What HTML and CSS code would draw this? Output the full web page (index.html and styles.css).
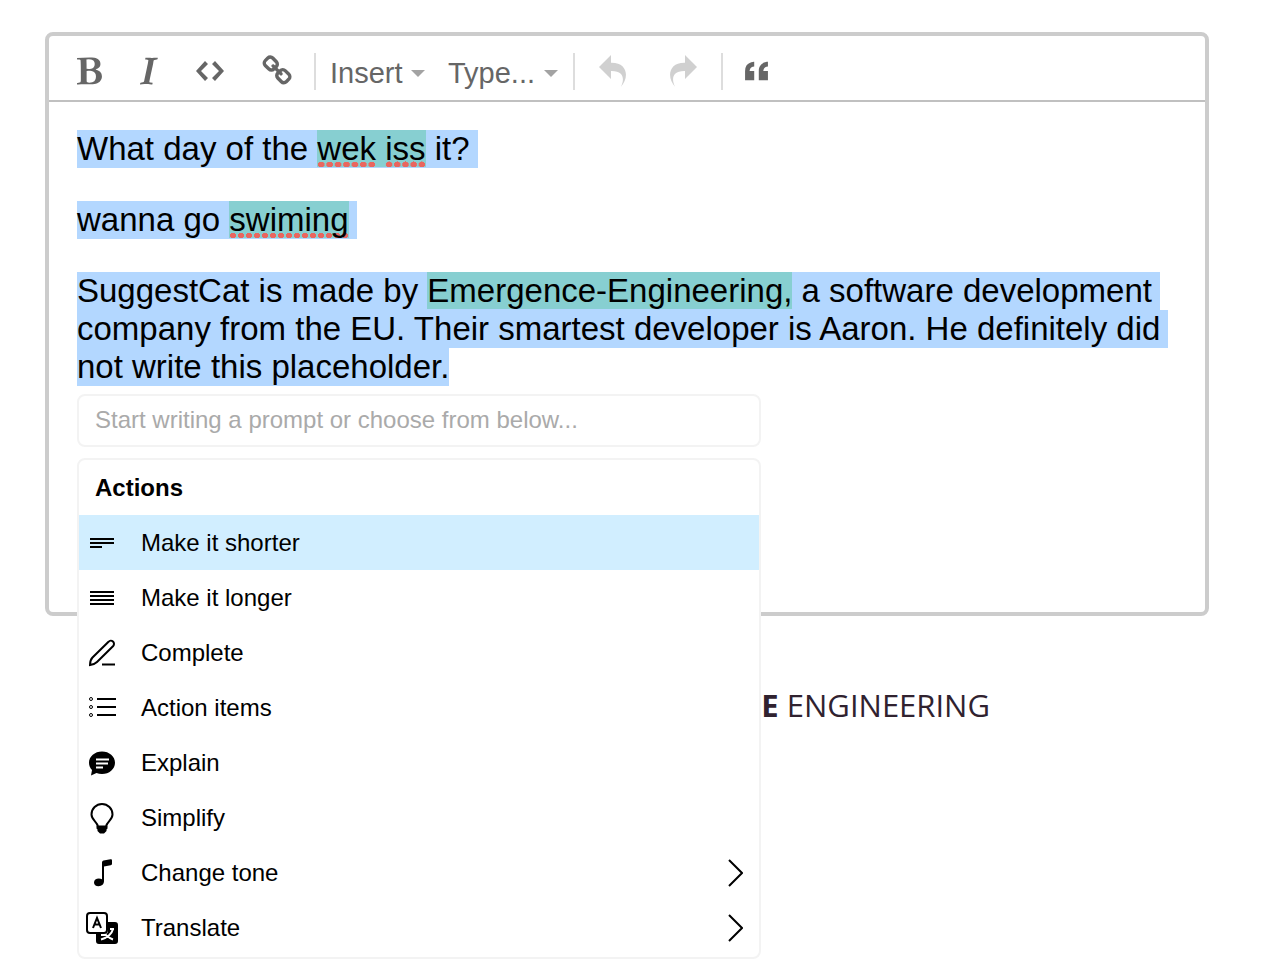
FILE: index.html
```html
<!DOCTYPE html>
<html lang="en">

<head>
    <meta charset="utf-8">
    <title>SuggestCat editor</title>
    <link rel="stylesheet" href="styles.css">
</head>
<body>
    <main class="page">
        <div class="editor">
            <div class="menubar">
                <button type="button" class="menu-icon" aria-label="Bold">
                    <svg width="25" height="32" viewBox="0 0 805 1024"><path d="M317 869q42 18 80 18 214 0 214-191 0-65-23-102-15-25-35-42t-38-26-46-14-48-6-54-1q-41 0-57 5 0 30-0 90t-0 90q0 4-0 38t-0 55 2 47 6 38zM309 442q24 4 62 4 46 0 81-7t62-25 42-51 14-81q0-40-16-70t-45-46-61-24-70-8q-28 0-74 7 0 28 2 86t2 86q0 15-0 45t-0 45q0 26 0 39zM0 950l1-53q8-2 48-9t60-15q4-6 7-15t4-19 3-18 1-21 0-19v-37q0-561-12-585-2-4-12-8t-25-6-28-4-27-2-17-1l-2-47q56-1 194-6t213-5q13 0 39 0t38 0q40 0 78 7t73 24 61 40 42 59 16 78q0 29-9 54t-22 41-36 32-41 25-48 22q88 20 146 76t58 141q0 57-20 102t-53 74-78 48-93 27-100 8q-25 0-75-1t-75-1q-60 0-175 6t-132 6z"/></svg>
                </button>
                <button type="button" class="menu-icon" aria-label="Italic">
                    <svg width="18" height="32" viewBox="0 0 585 1024"><path d="M0 949l9-48q3-1 46-12t63-21q16-20 23-57 0-4 35-165t65-310 29-169v-14q-13-7-31-10t-39-4-33-3l10-58q18 1 68 3t85 4 68 1q27 0 56-1t69-4 56-3q-2 22-10 50-17 5-58 16t-62 19q-4 10-8 24t-5 22-4 26-3 24q-15 84-50 239t-44 203q-1 5-7 33t-11 51-9 47-3 32l0 10q9 2 105 17-1 25-9 56-6 0-18 0t-18 0q-16 0-49-5t-49-5q-78-1-117-1-29 0-81 5t-69 6z"/></svg>
                </button>
                <button type="button" class="menu-icon" aria-label="Code">
                    <svg width="28" height="32" viewBox="0 0 896 1024"><path d="M608 192l-96 96 224 224-224 224 96 96 288-320-288-320zM288 192l-288 320 288 320 96-96-224-224 224-224-96-96z"/></svg>
                </button>
                <button type="button" class="menu-icon" aria-label="Link">
                    <svg width="30" height="32" viewBox="0 0 951 1024"><path d="M832 694q0-22-16-38l-118-118q-16-16-38-16-24 0-41 18 1 1 10 10t12 12 8 10 7 14 2 15q0 22-16 38t-38 16q-8 0-15-2t-14-7-10-8-12-12-10-10q-18 17-18 41 0 22 16 38l117 118q15 15 38 15 22 0 38-14l84-83q16-16 16-38zM430 292q0-22-16-38l-117-118q-16-16-38-16-22 0-38 15l-84 83q-16 16-16 37 0 22 16 38l118 118q15 15 38 15 24 0 41-17-1-1-10-10t-12-12-8-10-7-14-2-15q0-22 16-38t38-16q8 0 15 2t14 7 10 8 12 12 10 10q18-17 18-41zM941 694q0 68-48 116l-84 83q-47 47-116 47-69 0-116-48l-117-118q-47-47-47-116 0-70 50-119l-50-50q-49 50-118 50-68 0-116-48l-118-118q-48-48-48-116t48-116l84-83q47-47 116-47 69 0 116 48l117 118q47 47 47 116 0 70-50 119l50 50q49-50 118-50 68 0 116 48l118 118q48 48 48 116z"/></svg>
                </button>
                <span class="separator"></span>
                <div class="dropdown">
                    <select aria-label="Insert">
                        <option>Insert</option>
                    </select>
                </div>
                <div class="dropdown">
                    <select aria-label="Type">
                        <option>Type...</option>
                    </select>
                </div>
                <span class="separator"></span>
                <button type="button" class="menu-icon" aria-label="Undo" disabled>
                    <svg width="32" height="32" viewBox="0 0 1024 1024"><path d="M761 1024c113-206 132-520-313-509v253l-384-384 384-384v248c534-13 594 472 313 775z"/></svg>
                </button>
                <button type="button" class="menu-icon" aria-label="Redo" disabled>
                    <svg width="32" height="32" viewBox="0 0 1024 1024"><path d="M576 248v-248l384 384-384 384v-253c-446-10-427 303-313 509-280-303-221-789 313-775z"/></svg>
                </button>
                <span class="separator"></span>
                <button type="button" class="menu-icon" aria-label="Quote">
                    <svg width="23" height="32" viewBox="0 0 640 896"><path d="M0 448v256h256v-256h-128c0 0 0-128 128-128v-128c0 0-256 0-256 256zM640 320v-128c0 0-256 0-256 256v256h256v-256h-128c0 0 0-128 128-128z"/></svg>
                </button>
            </div>

            <div class="content">
                <p><span class="selected">What day of the <mark><u>wek</u> <u>iss</u></mark> it?</span></p>
                <p><span class="selected">wanna go <mark><u>swiming</u></mark></span></p>
                <p><span class="selected">SuggestCat is made by <mark>Emergence-Engineering,</mark> a software development company from the EU. Their smartest developer is Aaron. He definitely did</span> <span class="selected last">not write this placeholder.</span></p>
            </div>

            <div class="popup">
                <input type="text" class="prompt" aria-label="Prompt" placeholder="Start writing a prompt or choose from below...">
                <div class="actions">
                    <h2>Actions</h2>
                    <button type="button" class="action active">
                        <svg width="32" height="32" viewBox="0 0 32 32"><path d="M4 11h24v2H4zM4 15h24v2H4zM4 19h12v2H4z"/></svg>
                        Make it shorter
                    </button>
                    <button type="button" class="action">
                        <svg width="32" height="32" viewBox="0 0 32 32"><path d="M4 9h24v2H4zM4 13h24v2H4zM4 17h24v2H4zM4 21h24v2H4z"/></svg>
                        Make it longer
                    </button>
                    <button type="button" class="action">
                        <svg class="line" width="32" height="32" viewBox="0 0 32 32"><path d="M4 28c0-3 .5-5.500 2.500-7.500L22.500 4.800a3 3 0 0 1 4.700 4.200L11 25c-2 2-4 2.500-7 3zM16 27.500h13"/></svg>
                        Complete
                    </button>
                    <button type="button" class="action">
                        <svg class="line" width="32" height="32" viewBox="0 0 32 32"><path d="M11 7h19M11 15h19M11 23h19"/><g class="thin"><circle cx="5" cy="7" r="1.500"/><circle cx="5" cy="15" r="1.500"/><circle cx="5" cy="23" r="1.500"/></g></svg>
                        Action items
                    </button>
                    <button type="button" class="action">
                        <svg width="32" height="32" viewBox="0 0 32 32"><path d="M16 4.500c7.200 0 13 4.900 13 11.200S23.200 27 16 27c-2 0-3.800-.4-5.500-1.100L5 28.500l1-5.400c-1.900-2-3-4.500-3-7.400C3 9.400 8.800 4.500 16 4.500z"/><path class="bubble-lines" d="M10 12.500h13M10 16.500h12M10 20.500h7"/></svg>
                        Explain
                    </button>
                    <button type="button" class="action">
                        <svg width="32" height="32" viewBox="0 0 32 32"><path class="outline" d="M12 24.500C11 19.500 5.500 18 5.500 12.500a10.500 10.500 0 0 1 21 0C26.500 18 21 19.500 20 24.500z"/><path d="M10.500 24h11v2.500l-1 1V29l-2.500 2.500h-4L11.500 29v-1.500l-1-1z"/></svg>
                        Simplify
                    </button>
                    <button type="button" class="action">
                        <svg width="32" height="32" viewBox="0 0 32 32"><path d="M16 6c0-1.500.6-2.200 1.600-2.400l6.800-1.400c1-.2 1.600.3 1.600 1.300v3.200c0 .8-.5 1.300-1.400 1.500L18 9.400V24c0 3-2 5.200-5.500 5.200-2.800 0-4.500-1.500-4.500-3.700 0-2.500 2.200-4 4.800-4 1.300 0 2.300.3 3.200.8z"/></svg>
                        Change tone
                        <svg class="chevron" width="15" height="28" viewBox="0 0 15 28"><path d="M1 1l13 13L1 27"/></svg>
                    </button>
                    <button type="button" class="action">
                        <svg width="32" height="32" viewBox="0 0 32 32"><path d="M22 10h7a3 3 0 0 1 3 3v16a3 3 0 0 1-3 3H13a3 3 0 0 1-3-3v-7h9a3 3 0 0 0 3-3z"/><rect class="card" x="1" y="1" width="20" height="20" rx="3"/><path class="letter" d="M7 16l4-10 4 10M8.500 12.500h5"/><path class="glyph" d="M24 17h4M27 17c-1 4-4 8-12 10.500M15 23h5c2.500 2 4 3.500 7 4.500"/></svg>
                        Translate
                        <svg class="chevron" width="15" height="28" viewBox="0 0 15 28"><path d="M1 1l13 13L1 27"/></svg>
                    </button>
                </div>
            </div>
        </div>

        <footer class="brand"><b>EMERGENCE</b> ENGINEERING</footer>
    </main>
</body>

</html>
```

FILE: styles.css
```css
* {
    box-sizing: border-box;
}

body {
    margin: 0;
    background: #fff;
    color: #000;
    font-family: "Liberation Sans", Arial, sans-serif;
}

.page {
    min-height: 100vh;
    padding: 32px 57px 0 45px;
}

.editor {
    position: relative;
    min-height: 584px;
    border: 4px solid #ccc;
    border-radius: 8px;
}

/* toolbar */
.menubar {
    display: flex;
    align-items: center;
    gap: 6px;
    padding: 17px 12px 10px;
    border-bottom: 2px solid silver;
    color: #666;
}

.menu-icon {
    display: flex;
    padding: 0 16px 2px;
    border: 0;
    background: none;
}

.menu-icon svg {
    fill: #666;
}

.menu-icon:disabled svg {
    fill: #d0d0d0;
}

.separator {
    width: 2px;
    height: 37px;
    background: #ddd;
}

.dropdown {
    position: relative;
}

.dropdown select {
    appearance: none;
    display: block;
    padding: 4px 31px 0 8px;
    border: 0;
    background: none;
    color: #666;
    font-family: inherit;
    font-size: 29px;
    line-height: 33px;
}

.dropdown::after {
    content: "";
    position: absolute;
    right: 9px;
    top: 17px;
    border: 7px solid transparent;
    border-top-color: #a3a3a3;
    border-bottom: 0;
    pointer-events: none;
}

/* document */
.content {
    padding: 28px 20px 28px 28px;
    font-size: 33px;
    line-height: 38px;
}

.content p {
    margin: 0 0 33px;
}

.selected {
    padding: 0 8px 1px 0;
    background: #b3d7ff;
    -webkit-box-decoration-break: clone;
    box-decoration-break: clone;
}

.last {
    padding-right: 0;
}

mark {
    background: #87cfd1;
    color: inherit;
}

u {
    padding-bottom: 1px;
    text-decoration: none;
    background: radial-gradient(circle, #e9665f 3px, transparent 3px) left bottom / 8px 7px;
    background-repeat: round no-repeat;
}

/* suggestion popup */
.popup {
    position: absolute;
    top: 358px;
    left: 28px;
    width: 684px;
    max-width: 100%;
    display: flex;
    flex-direction: column;
    gap: 11px;
}

.prompt {
    width: 100%;
    height: 53px;
    padding: 0 16px 2px;
    border: 2px solid #f3f3f3;
    border-radius: 8px;
    background: #fff;
    font-family: inherit;
    font-size: 24px;
}

.prompt::placeholder {
    color: #aaa;
}

.actions {
    padding-bottom: 2px;
    border: 2px solid #f3f3f3;
    border-radius: 8px;
    background: #fff;
}

.actions h2 {
    margin: 0;
    padding: 0 16px;
    font-size: 24px;
    line-height: 55px;
}

.action {
    display: flex;
    align-items: center;
    gap: 23px;
    width: 100%;
    height: 55px;
    padding: 0 16px 0 7px;
    border: 0;
    background: none;
    color: #000;
    font-family: inherit;
    font-size: 24px;
    text-align: left;
}

.active {
    background: #d1eeff;
}

.line,
.outline,
.chevron {
    fill: none;
    stroke: #000;
    stroke-width: 2;
}

.thin {
    stroke-width: 1;
}

.outline {
    fill: #fff;
}

.bubble-lines,
.glyph {
    fill: none;
    stroke: #fff;
    stroke-width: 2;
}

.card {
    fill: #fff;
    stroke: #000;
    stroke-width: 2;
}

.letter {
    fill: none;
    stroke: #000;
    stroke-width: 2;
}

.chevron {
    margin-left: auto;
}

/* company name under the editor */
.brand {
    width: 726px;
    max-width: 100%;
    margin: 68px auto 0;
    color: #30222f;
    font-family: "Open Sans", sans-serif;
    font-size: 31px;
    line-height: 42px;
    text-align: right;
    white-space: nowrap;
}
```
